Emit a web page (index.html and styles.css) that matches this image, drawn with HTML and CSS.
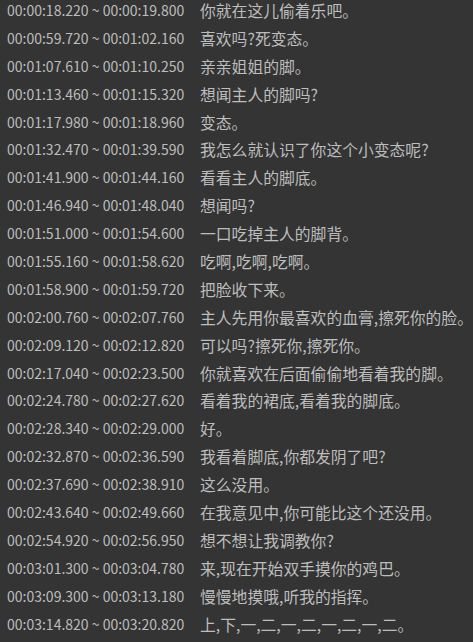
FILE: index.html
```html
<!DOCTYPE html>
<html lang="zh-CN">
<head>
  <meta charset="UTF-8">
  <title>字幕</title>
  <link rel="stylesheet" href="styles.css">
</head>
<body>
  <div class="subs">
    <div class="row"><span class="time">00:00:18.220 ~ 00:00:19.800</span><span class="line">你就在这儿偷着乐吧。</span></div>
    <div class="row"><span class="time">00:00:59.720 ~ 00:01:02.160</span><span class="line">喜欢吗?死变态。</span></div>
    <div class="row"><span class="time">00:01:07.610 ~ 00:01:10.250</span><span class="line">亲亲姐姐的脚。</span></div>
    <div class="row"><span class="time">00:01:13.460 ~ 00:01:15.320</span><span class="line">想闻主人的脚吗?</span></div>
    <div class="row"><span class="time">00:01:17.980 ~ 00:01:18.960</span><span class="line">变态。</span></div>
    <div class="row"><span class="time">00:01:32.470 ~ 00:01:39.590</span><span class="line">我怎么就认识了你这个小变态呢?</span></div>
    <div class="row"><span class="time">00:01:41.900 ~ 00:01:44.160</span><span class="line">看看主人的脚底。</span></div>
    <div class="row"><span class="time">00:01:46.940 ~ 00:01:48.040</span><span class="line">想闻吗?</span></div>
    <div class="row"><span class="time">00:01:51.000 ~ 00:01:54.600</span><span class="line">一口吃掉主人的脚背。</span></div>
    <div class="row"><span class="time">00:01:55.160 ~ 00:01:58.620</span><span class="line">吃啊,吃啊,吃啊。</span></div>
    <div class="row"><span class="time">00:01:58.900 ~ 00:01:59.720</span><span class="line">把脸收下来。</span></div>
    <div class="row"><span class="time">00:02:00.760 ~ 00:02:07.760</span><span class="line">主人先用你最喜欢的血膏,擦死你的脸。</span></div>
    <div class="row"><span class="time">00:02:09.120 ~ 00:02:12.820</span><span class="line">可以吗?擦死你,擦死你。</span></div>
    <div class="row"><span class="time">00:02:17.040 ~ 00:02:23.500</span><span class="line">你就喜欢在后面偷偷地看着我的脚。</span></div>
    <div class="row"><span class="time">00:02:24.780 ~ 00:02:27.620</span><span class="line">看着我的裙底,看着我的脚底。</span></div>
    <div class="row"><span class="time">00:02:28.340 ~ 00:02:29.000</span><span class="line">好。</span></div>
    <div class="row"><span class="time">00:02:32.870 ~ 00:02:36.590</span><span class="line">我看着脚底,你都发阴了吧?</span></div>
    <div class="row"><span class="time">00:02:37.690 ~ 00:02:38.910</span><span class="line">这么没用。</span></div>
    <div class="row"><span class="time">00:02:43.640 ~ 00:02:49.660</span><span class="line">在我意见中,你可能比这个还没用。</span></div>
    <div class="row"><span class="time">00:02:54.920 ~ 00:02:56.950</span><span class="line">想不想让我调教你?</span></div>
    <div class="row"><span class="time">00:03:01.300 ~ 00:03:04.780</span><span class="line">来,现在开始双手摸你的鸡巴。</span></div>
    <div class="row"><span class="time">00:03:09.300 ~ 00:03:13.180</span><span class="line">慢慢地摸哦,听我的指挥。</span></div>
    <div class="row"><span class="time">00:03:14.820 ~ 00:03:20.820</span><span class="line">上,下,一,二,一,二,一,二,一,二。</span></div>
  </div>
</body>
</html>
```

FILE: styles.css
```css
html, body {
  margin: 0;
  background-color: #343434;
  height: 100%;
  overflow: hidden;
}
body {
  color: #bdbdbd;
  font-family: "Noto Sans CJK SC", "Noto Sans", sans-serif;
  font-size: 15.8px;
}
.subs {
  margin-top: -3px;
  padding-left: 7px;
}
.row {
  display: grid;
  grid-template-columns: 193px 1fr;
  height: 27.9px;
  line-height: 27.9px;
  white-space: nowrap;
}
.time {
  font-size: 14px;
}
```
